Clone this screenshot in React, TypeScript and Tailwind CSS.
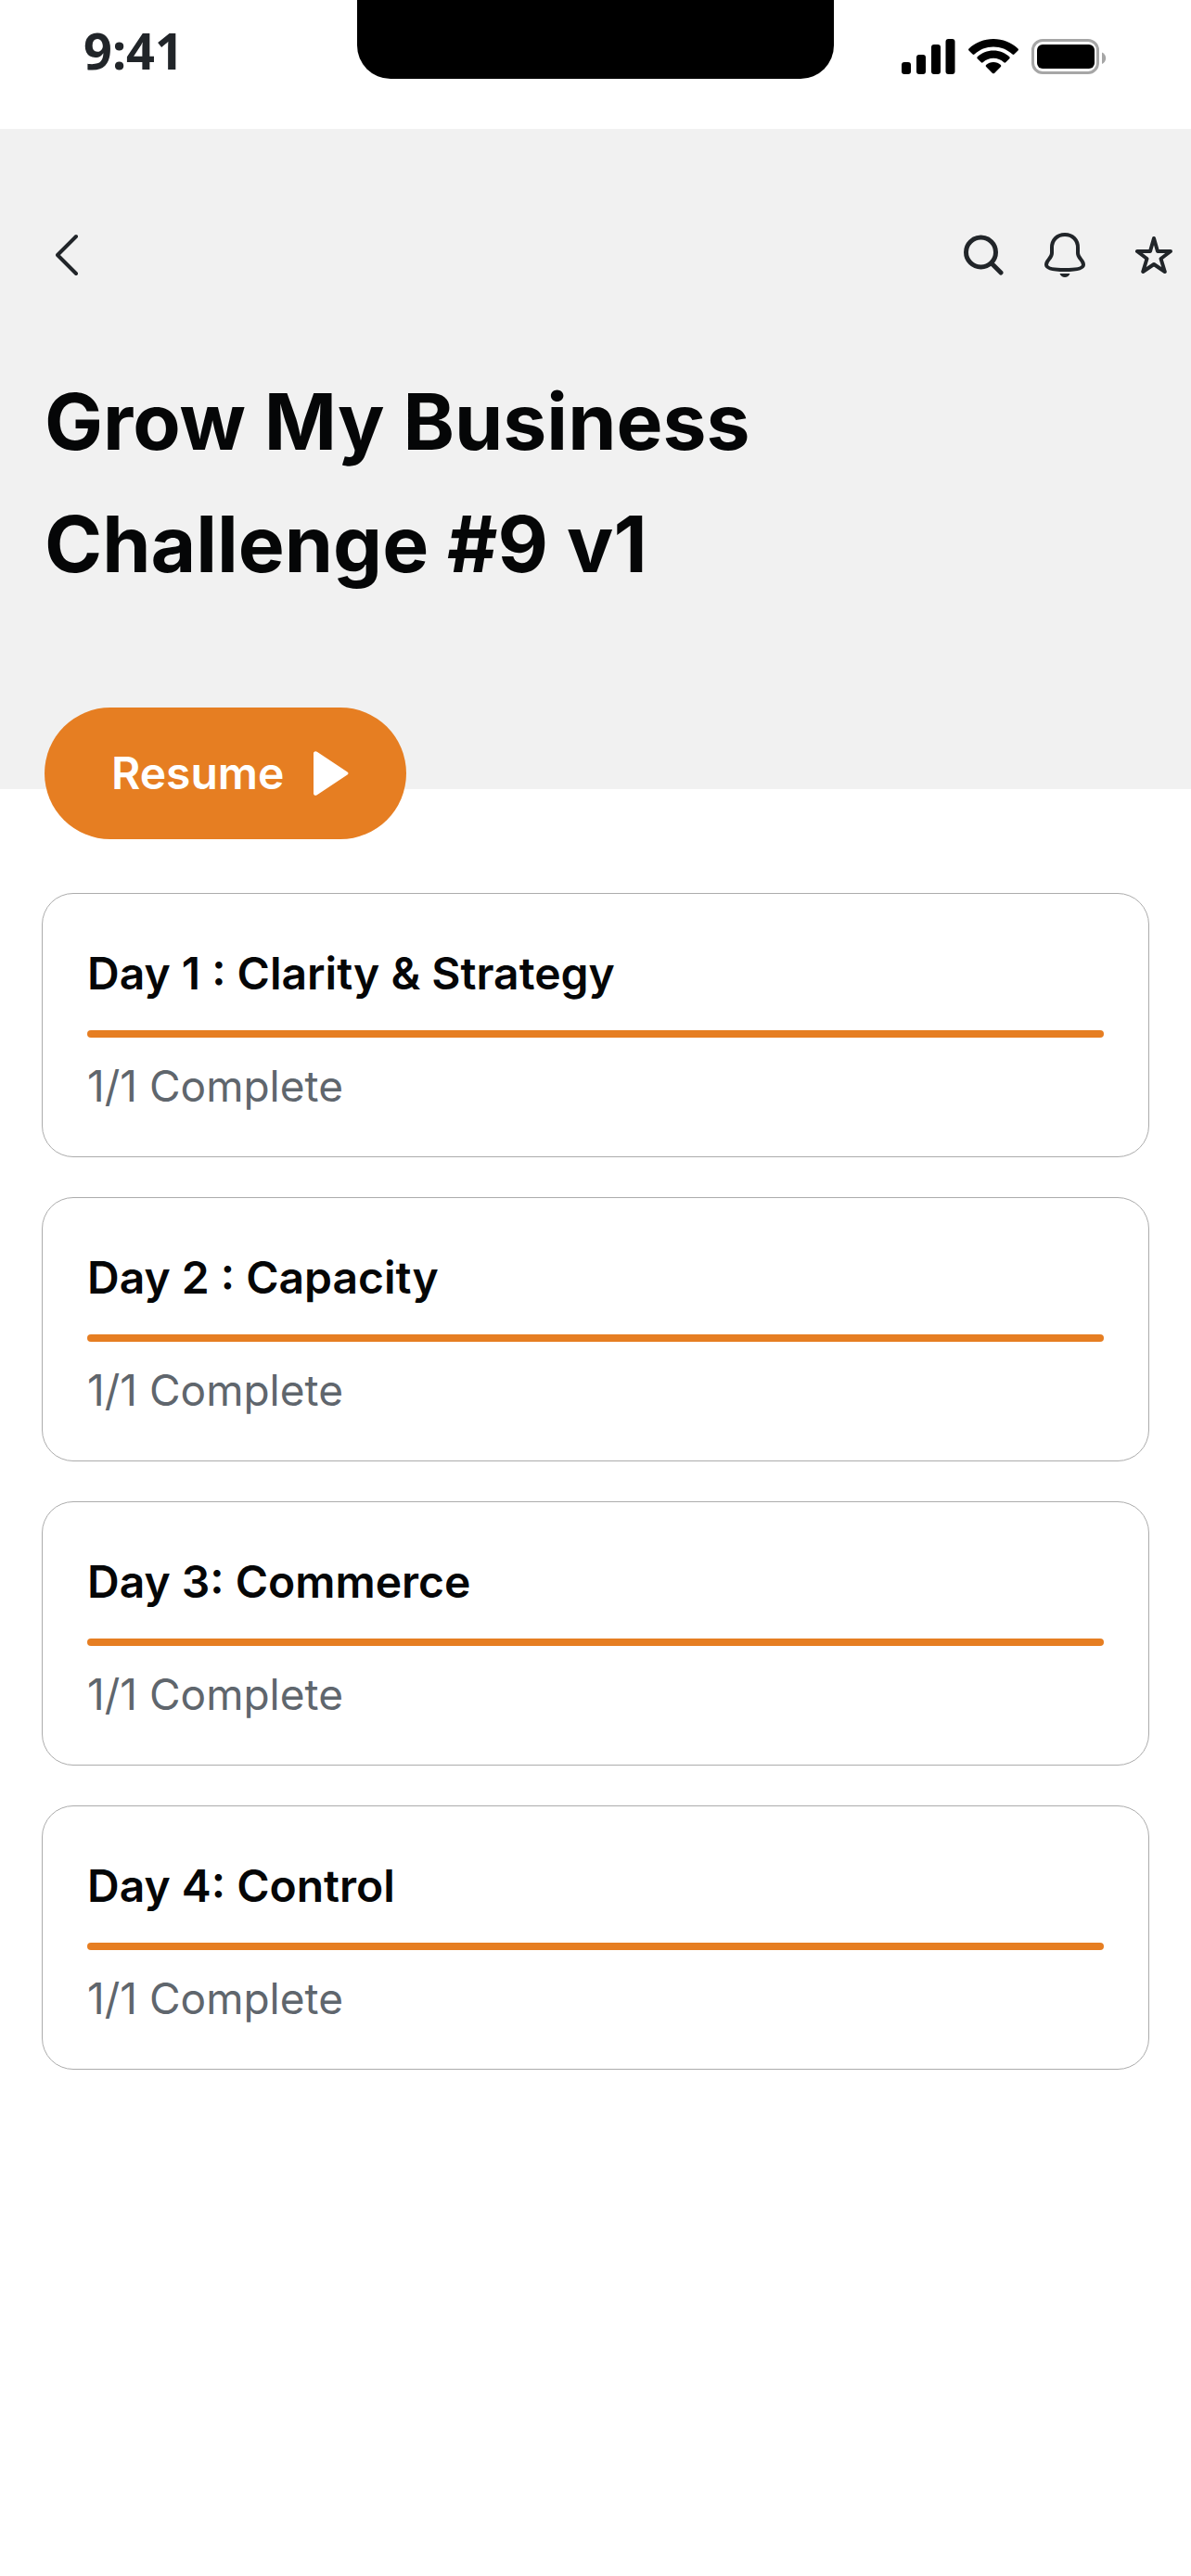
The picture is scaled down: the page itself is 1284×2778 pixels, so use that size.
const days = [
  { title: "Day 1 : Clarity & Strategy", done: 1, total: 1 },
  { title: "Day 2 : Capacity", done: 1, total: 1 },
  { title: "Day 3: Commerce", done: 1, total: 1 },
  { title: "Day 4: Control", done: 1, total: 1 },
];

function StatusBar() {
  return (
    <div className="flex h-[139px] items-start justify-between bg-white">
      <div className="flex-1 pt-[22px] pl-[90px] font-['Noto_Sans','Open_Sans',sans-serif] text-[54px] leading-[64px] font-bold text-[#212529]">
        9:41
      </div>
      <div className="h-[85px] w-2/5 rounded-b-[36px] bg-black" />
      <div className="flex flex-1 justify-end gap-[14px] pt-[42px] pr-[90px]">
        <svg width="58" height="38" viewBox="0 0 58 38" aria-label="Signal">
          <rect x="0" y="25" width="10" height="13" rx="3" />
          <rect x="16" y="17" width="10" height="21" rx="3" />
          <rect x="32" y="6" width="10" height="32" rx="3" />
          <rect x="47.5" y="0" width="10" height="38" rx="3" />
        </svg>
        <svg width="54" height="38" viewBox="0 0 54 38" aria-label="Wi-Fi">
          <path d="M27 0C37 0 46.400 3.800 53.500 10.500Q54.400 11.500 53.500 12.500L49.400 16.600Q48.500 17.400 47.500 16.500C42 11.300 34.800 8.400 27 8.400S12 11.300 6.500 16.500Q5.500 17.400 4.600 16.600L.5 12.500Q-.4 11.500 .5 10.500C7.600 3.800 17 0 27 0Z" />
          <path d="M27 12.500C33.600 12.500 39.700 15 44.300 19.300Q45.200 20.300 44.300 21.200L40.200 25.300Q39.300 26.100 38.300 25.200C35.200 22.400 31.300 20.800 27 20.800S18.800 22.400 15.700 25.200Q14.700 26.100 13.800 25.300L9.700 21.200Q8.800 20.300 9.700 19.300C14.300 15 20.400 12.500 27 12.500Z" />
          <path d="M27 25C30 25 32.700 26 34.900 27.900Q35.800 28.900 34.900 29.900L28 36.900Q27 37.800 26 36.900L19.100 29.900Q18.200 28.900 19.100 27.900C21.300 26 24 25 27 25Z" />
        </svg>
        <svg width="82" height="38" viewBox="0 0 82 38" aria-label="Battery">
          <rect x="1.500" y="1.500" width="70" height="35" rx="10.500" fill="none" stroke="#a6a6a6" strokeWidth="3" />
          <rect x="6" y="6" width="62" height="26" rx="6" />
          <path d="M76 14.500C78.500 15.500 80.200 18 80.200 20.800S78.500 26 76 27Z" fill="#a6a6a6" />
        </svg>
      </div>
    </div>
  );
}

function TopNav() {
  return (
    <nav className="flex h-12 items-center justify-between pr-5 pl-[60px] text-[#212529]">
      <button type="button" aria-label="Back">
        <svg width="26" height="48" viewBox="0 0 26 48" fill="none" stroke="currentColor" strokeWidth="4" strokeLinecap="round" strokeLinejoin="round">
          <path d="M22 4 2 24 22 44" />
        </svg>
      </button>
      <div className="flex items-center">
        <button type="button" aria-label="Search" className="mr-11">
          <svg width="43" height="48" viewBox="0 0 43 48" fill="none" stroke="currentColor" strokeWidth="5" strokeLinecap="round">
            <circle cx="18.500" cy="21" r="16" />
            <path d="m30.500 33.500 9.500 9.500" />
          </svg>
        </button>
        <button type="button" aria-label="Notifications" className="mr-[54px]">
          <svg width="44" height="48" viewBox="0 0 44 48" fill="none" stroke="currentColor" strokeWidth="4" strokeLinejoin="round">
            <path d="M22 2C13.500 2 8 8 8 16V22C8 27.500 2 29.500 2 34.500C2 38.500 10 40 22 40S42 38.500 42 34.500C42 29.500 36 27.500 36 22V16C36 8 30.500 2 22 2Z" />
            <path d="M16.500 44H27.500C26.500 46.600 24.500 48 22 48S17.500 46.600 16.500 44Z" fill="currentColor" stroke="none" />
          </svg>
        </button>
        <button type="button" aria-label="Favourite">
          <svg width="40" height="48" viewBox="0 0 40 48" fill="none" stroke="currentColor" strokeWidth="4" strokeLinejoin="round">
            <path d="M20 6 24 20H38L27.500 28 31.800 42 20 34 8.200 42 12.500 28 2 20H16Z" />
          </svg>
        </button>
      </div>
    </nav>
  );
}

function DayCard({ title, done, total }: { title: string; done: number; total: number }) {
  return (
    <li className="rounded-[34px] border border-[#acacac] bg-white px-12 pt-[54px] pb-11">
      <h2 className="text-[48px] leading-[64px] font-semibold">{title}</h2>
      <div
        role="progressbar"
        aria-label={title}
        aria-valuenow={done}
        aria-valuemax={total}
        className="mt-[29px] h-2 w-full"
      >
        <div className="h-full rounded-full bg-[#e67e22]" style={{ width: `${(done / total) * 100}%` }} />
      </div>
      <p className="mt-5 text-[46px] leading-[64px] text-[#5f666d]">
        {done}/{total} Complete
      </p>
    </li>
  );
}

export default function App() {
  return (
    <div className="min-h-screen bg-white font-['Inter',sans-serif] text-[#050607]">
      <StatusBar />
      <header className="bg-[#f1f1f1] pt-28">
        <TopNav />
        <h1 className="mt-[90px] max-w-[900px] px-12 text-[84px] leading-[132px] font-bold">
          Grow My Business Challenge #9 v1
        </h1>
        <div className="mt-[110px] h-[88px] px-12">
          <button
            type="button"
            className="flex h-[142px] w-[390px] items-center gap-8 rounded-full bg-[#e67e22] pl-[72px] text-[48px] font-semibold text-white"
          >
            Resume
            <svg width="38" height="48" viewBox="0 0 38 48" fill="currentColor" aria-hidden="true">
              <path d="M0 2.500C0 .5 2 -.5 3.800 .7L36.500 22.500Q38.500 24 36.500 25.500L3.800 47.300C2 48.500 0 47.500 0 45.500Z" />
            </svg>
          </button>
        </div>
      </header>
      <ul className="mt-28 flex flex-col gap-[43px] px-[45px] pb-12">
        {days.map((day) => (
          <DayCard key={day.title} {...day} />
        ))}
      </ul>
    </div>
  );
}
